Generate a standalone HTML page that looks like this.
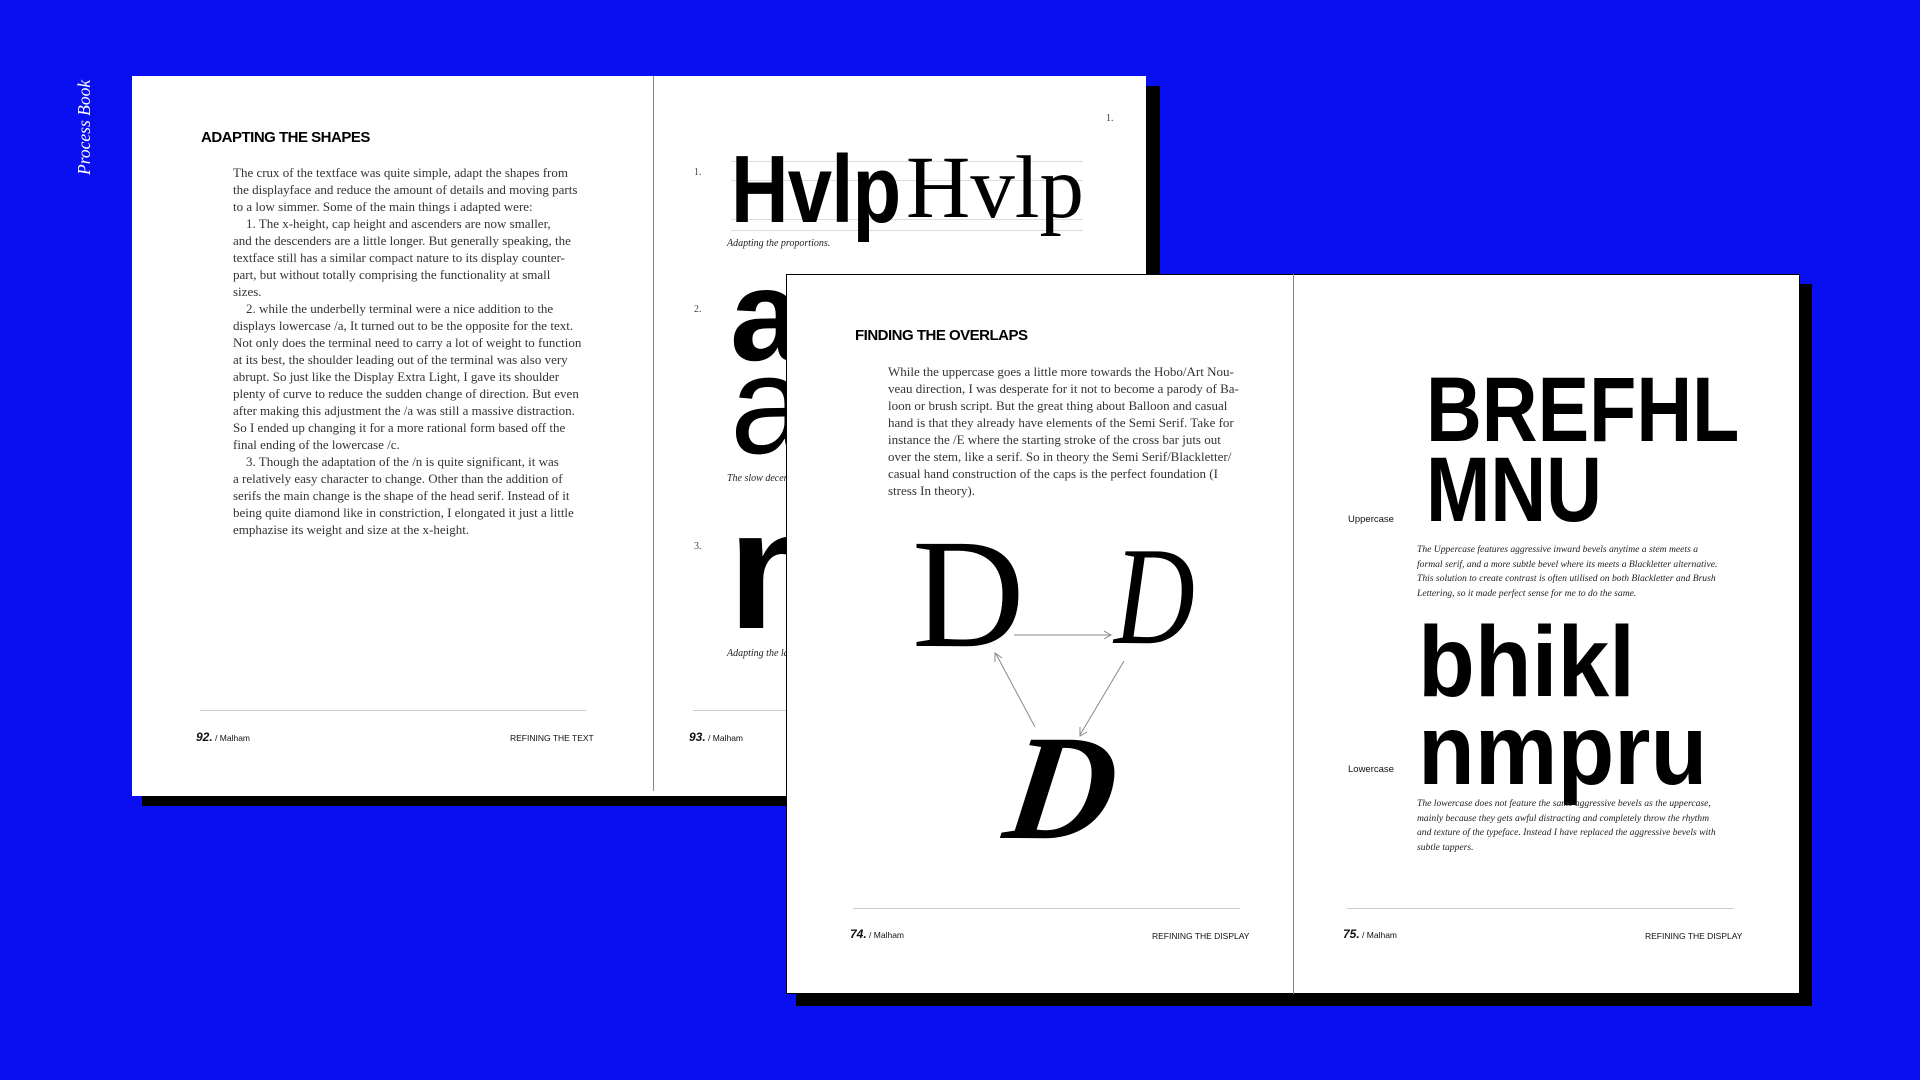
<!DOCTYPE html>
<html><head><meta charset="utf-8"><style>
*{margin:0;padding:0;box-sizing:border-box}
body{width:1920px;height:1080px;background:#0a0ff2;position:relative;overflow:hidden;font-family:"Liberation Serif",serif;color:#222}
.a{position:absolute}
.pg{background:#fff}
.sh{background:#000}
.disp{font-family:"Liberation Sans",sans-serif;font-weight:bold;color:#000;letter-spacing:-1px;transform-origin:0 0}
.h{font-family:"Liberation Sans",sans-serif;font-weight:bold;font-size:15px;color:#000;letter-spacing:-0.5px}
.body{font-size:13px;line-height:17px;color:#333;white-space:nowrap}
.cap{font-style:italic;font-size:10px;color:#222;white-space:nowrap}
.ft{font-family:"Liberation Sans",sans-serif;font-size:8.5px;color:#111;white-space:nowrap}
.ft b{font-size:12px;font-style:italic;font-weight:900}
.line{height:1px;background:#ccc}
.num{font-size:10px;color:#444}
</style></head><body>
<div class="a" style="left:74px;top:175px;transform:rotate(-90deg);transform-origin:0 0;color:#fff;font-style:italic;font-size:17.5px;white-space:nowrap">Process Book</div>

<!-- back spread -->
<div class="a sh" style="left:142px;top:86px;width:1018px;height:720px"></div>
<div class="a pg" style="left:132px;top:76px;width:1014px;height:720px"></div>
<div class="a" style="left:653px;top:76px;width:1px;height:715px;background:#888"></div>
<div class="a h" style="left:201px;top:129px">ADAPTING THE SHAPES</div>
<div class="a body" style="left:233px;top:164px">The crux of the textface was quite simple, adapt the shapes from<br>the displayface and reduce the amount of details and moving parts<br>to a low simmer. Some of the main things i adapted were:<br>&nbsp;&nbsp;&nbsp;&nbsp;1. The x-height, cap height and ascenders are now smaller,<br>and the descenders are a little longer. But generally speaking, the<br>textface still has a similar compact nature to its display counter-<br>part, but without totally comprising the functionality at small<br>sizes.<br>&nbsp;&nbsp;&nbsp;&nbsp;2. while the underbelly terminal were a nice addition to the<br>displays lowercase /a, It turned out to be the opposite for the text.<br>Not only does the terminal need to carry a lot of weight to function<br>at its best, the shoulder leading out of the terminal was also very<br>abrupt. So just like the Display Extra Light, I gave its shoulder<br>plenty of curve to reduce the sudden change of direction. But even<br>after making this adjustment the /a was still a massive distraction.<br>So I ended up changing it for a more rational form based off the<br>final ending of the lowercase /c.<br>&nbsp;&nbsp;&nbsp;&nbsp;3. Though the adaptation of the /n is quite significant, it was<br>a relatively easy character to change. Other than the addition of<br>serifs the main change is the shape of the head serif. Instead of it<br>being quite diamond like in constriction, I elongated it just a little<br>emphazise its weight and size at the x-height.</div>
<div class="a line" style="left:200px;top:710px;width:386px"></div>
<div class="a ft" style="left:196px;top:730px"><b>92.</b> / Malham</div>
<div class="a ft" style="left:510px;top:733px">REFINING THE TEXT</div>

<div class="a num" style="left:1106px;top:113px">1.</div>
<div class="a num" style="left:694px;top:167px">1.</div>
<div class="a line" style="left:731px;top:161px;width:352px;background:#ddd"></div>
<div class="a line" style="left:731px;top:180px;width:352px;background:#ddd"></div>
<div class="a line" style="left:731px;top:219px;width:352px;background:#ddd"></div>
<div class="a line" style="left:731px;top:230px;width:352px;background:#ddd"></div>
<div class="a disp" style="left:731px;top:140px;font-size:96px;line-height:100px;font-weight:900;transform:scaleX(0.83)">Hvlp</div>
<div class="a" style="left:906px;top:138px;font-size:89px;line-height:100px;color:#000">Hvlp</div>
<div class="a cap" style="left:727px;top:238px">Adapting the proportions.</div>
<div class="a num" style="left:694px;top:304px">2.</div>
<div class="a disp" style="left:730px;top:250px;font-size:130px;line-height:130px">a</div>
<div class="a" style="left:730px;top:340px;font-size:140px;line-height:130px;color:#000;font-family:'Liberation Sans',sans-serif">a</div>
<div class="a cap" style="left:727px;top:473px">The slow decent</div>
<div class="a num" style="left:694px;top:541px">3.</div>
<div class="a disp" style="left:728px;top:490px;font-size:170px;line-height:160px">n</div>
<div class="a cap" style="left:727px;top:648px">Adapting the la</div>
<div class="a line" style="left:693px;top:710px;width:100px"></div>
<div class="a ft" style="left:689px;top:730px"><b>93.</b> / Malham</div>

<!-- front spread -->
<div class="a sh" style="left:796px;top:284px;width:1016px;height:722px"></div>
<div class="a pg" style="left:786px;top:274px;width:1014px;height:720px;border:1px solid #000"></div>
<div class="a" style="left:1293px;top:274px;width:1px;height:720px;background:#888"></div>
<div class="a h" style="left:855px;top:327px">FINDING THE OVERLAPS</div>
<div class="a body" style="left:888px;top:363px">While the uppercase goes a little more towards the Hobo/Art Nou-<br>veau direction, I was desperate for it not to become a parody of Ba-<br>loon or brush script. But the great thing about Balloon and casual<br>hand is that they already have elements of the Semi Serif. Take for<br>instance the /E where the starting stroke of the cross bar juts out<br>over the stem, like a serif. So in theory the Semi Serif/Blackletter/<br>casual hand construction of the caps is the perfect foundation (I<br>stress In theory).</div>
<div class="a" style="left:912px;top:516px;font-size:156px;line-height:156px;color:#000">D</div>
<div class="a" style="left:1114px;top:522px;font-size:140px;line-height:150px;color:#000;font-style:italic;transform:scaleX(0.8);transform-origin:0 0">D</div>
<div class="a" style="left:1008px;top:710px;font-size:150px;line-height:156px;color:#000;font-style:italic;font-weight:bold;transform:skewX(-8deg)">D</div>
<svg class="a" style="left:0;top:0" width="1920" height="1080"><g stroke="#888" stroke-width="1" fill="none">
<line x1="1014" y1="635" x2="1110" y2="635"/><path d="M1104 631 L1111 635 L1104 639"/>
<line x1="1035" y1="727" x2="996" y2="654"/><path d="M995 662 L995 653 L1002 658"/>
<line x1="1124" y1="661" x2="1080" y2="735"/><path d="M1080 727 L1080 736 L1087 732"/>
</g></svg>
<div class="a line" style="left:853px;top:908px;width:387px"></div>
<div class="a ft" style="left:850px;top:927px"><b>74.</b> / Malham</div>
<div class="a ft" style="left:1152px;top:931px">REFINING THE DISPLAY</div>

<div class="a disp" style="left:1426px;top:370px;font-size:92px;line-height:80px;font-weight:900;letter-spacing:0px;transform:scaleX(0.84)">BREFHL<br>MNU</div>
<div class="a ft" style="left:1348px;top:514px;font-size:9.5px">Uppercase</div>
<div class="a cap" style="left:1417px;top:543px;font-size:9.6px;line-height:14.7px">The Uppercase features aggressive inward bevels anytime a stem meets a<br>formal serif, and a more subtle bevel where its meets a Blackletter alternative.<br>This solution to create contrast is often utilised on both Blackletter and Brush<br>Lettering, so it made perfect sense for me to do the same.</div>
<div class="a disp" style="left:1418px;top:618px;font-size:100px;line-height:88px;font-weight:900;letter-spacing:0px;transform:scaleX(0.93)">bhikl<br>nmpru</div>
<div class="a ft" style="left:1348px;top:764px;font-size:9.5px">Lowercase</div>
<div class="a cap" style="left:1417px;top:797px;font-size:9.6px;line-height:14.7px">The lowercase does not feature the same aggressive bevels as the uppercase,<br>mainly because they gets awful distracting and completely throw the rhythm<br>and texture of the typeface. Instead I have replaced the aggressive bevels with<br>subtle tappers.</div>
<div class="a line" style="left:1347px;top:908px;width:387px"></div>
<div class="a ft" style="left:1343px;top:927px"><b>75.</b> / Malham</div>
<div class="a ft" style="left:1645px;top:931px">REFINING THE DISPLAY</div>
</body></html>
